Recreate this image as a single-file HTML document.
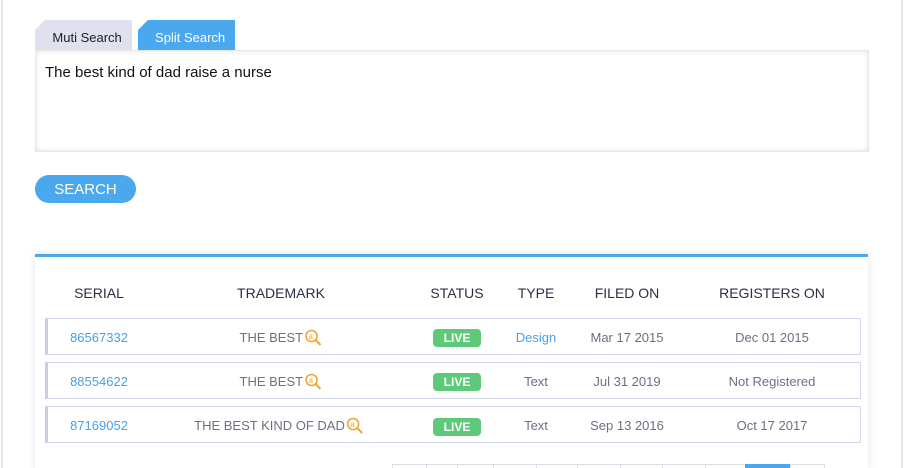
<!DOCTYPE html>
<html style="overflow:hidden;height:468px"><head><style>
body{margin:0;width:904px;height:468px;overflow:hidden;background:#fff;font-family:"Liberation Sans",sans-serif;position:relative}
.vl{position:absolute;top:0;bottom:0;width:2px;background:#e2e4f0}
.tab{position:absolute;top:20px;height:30px;width:97px;font-size:13px;line-height:36px;text-align:center;clip-path:polygon(10px 0,100% 0,100% 100%,0 100%,0 10px)}
.ta{position:absolute;left:35px;top:50px;width:832px;height:100px;border:1px solid #e8e8e8;box-shadow:inset 0 0 6px rgba(0,0,0,.12);font-size:15px;color:#111}
.btn{position:absolute;left:35px;top:175px;width:101px;height:28px;border-radius:14px;background:#4aa8ee;color:#fff;font-size:15px;line-height:29px;text-align:center}
.panel{position:absolute;left:35px;top:254px;width:833px;height:214px;border-top:3px solid #4aa8ee;box-shadow:0 0 8px rgba(0,0,0,.1);background:#fff}
.c{position:absolute;transform:translateX(-50%);white-space:nowrap}
.h{top:285px;font-size:14px;color:#2a2f45}
.row{position:absolute;left:45px;width:812px;height:35px;border:1px solid #d3d6ea;border-left:3px solid #c9cde6}
.t{font-size:13px;color:#6b7180}
.b{font-size:13px;color:#4aa0e8}
.live{background:#5ec97a;color:#fff;font-size:12px;font-weight:bold;width:48px;height:18px;line-height:19px;text-align:center;border-radius:4px}
.pg{position:absolute;top:464px;height:10px;border:1px solid #dcdfe6;border-right:none}
</style></head><body>
<div class="vl" style="left:1px"></div><div class="vl" style="left:901px"></div>
<div class="tab" style="left:35px;background:#dfe1ee;color:#222">&nbsp;&nbsp;Muti Search</div>
<div class="tab" style="left:138px;background:#4aa8ee;color:#fff">&nbsp;&nbsp;Split Search</div>
<div class="ta"><div style="position:absolute;left:9px;top:13px">The best kind of dad raise a nurse</div></div>
<div class="btn">SEARCH</div>
<div class="panel"></div>
<div class="c h" style="left:99px">SERIAL</div>
<div class="c h" style="left:281px">TRADEMARK</div>
<div class="c h" style="left:457px">STATUS</div>
<div class="c h" style="left:536px">TYPE</div>
<div class="c h" style="left:627px">FILED ON</div>
<div class="c h" style="left:772px">REGISTERS ON</div>

<div class="row" style="top:318px"></div>
<div class="row" style="top:362px"></div>
<div class="row" style="top:406px"></div>

<div class="c b" style="left:99px;top:330px">86567332</div>
<div class="c t" style="left:281px;top:329px">THE BEST <svg width="18" height="18" viewBox="0 0 18 18" style="vertical-align:-5px;margin-left:-2px"><circle cx="7" cy="7" r="5.5" fill="none" stroke="#f0a438" stroke-width="1.6"/><line x1="11" y1="11" x2="16" y2="16" stroke="#f0a438" stroke-width="2"/><text x="4" y="10" font-size="8" fill="#f0a438" font-family="Liberation Sans">a</text></svg></div>
<div class="c live" style="left:457px;top:329px">LIVE</div>
<div class="c b" style="left:536px;top:330px">Design</div>
<div class="c t" style="left:627px;top:330px">Mar 17 2015</div>
<div class="c t" style="left:772px;top:330px">Dec 01 2015</div>

<div class="c b" style="left:99px;top:374px">88554622</div>
<div class="c t" style="left:281px;top:373px">THE BEST <svg width="18" height="18" viewBox="0 0 18 18" style="vertical-align:-5px;margin-left:-2px"><circle cx="7" cy="7" r="5.5" fill="none" stroke="#f0a438" stroke-width="1.6"/><line x1="11" y1="11" x2="16" y2="16" stroke="#f0a438" stroke-width="2"/><text x="4" y="10" font-size="8" fill="#f0a438" font-family="Liberation Sans">a</text></svg></div>
<div class="c live" style="left:457px;top:373px">LIVE</div>
<div class="c t" style="left:536px;top:374px">Text</div>
<div class="c t" style="left:627px;top:374px">Jul 31 2019</div>
<div class="c t" style="left:772px;top:374px">Not Registered</div>

<div class="c b" style="left:99px;top:418px">87169052</div>
<div class="c t" style="left:279px;top:417px">THE BEST KIND OF DAD<svg width="18" height="18" viewBox="0 0 18 18" style="vertical-align:-5px;margin-left:1px"><circle cx="7" cy="7" r="5.5" fill="none" stroke="#f0a438" stroke-width="1.6"/><line x1="11" y1="11" x2="16" y2="16" stroke="#f0a438" stroke-width="2"/><text x="4" y="10" font-size="8" fill="#f0a438" font-family="Liberation Sans">a</text></svg></div>
<div class="c live" style="left:457px;top:418px">LIVE</div>
<div class="c t" style="left:536px;top:418px">Text</div>
<div class="c t" style="left:627px;top:418px">Sep 13 2016</div>
<div class="c t" style="left:772px;top:418px">Oct 17 2017</div>

<div class="pg" style="left:392px;width:34px"></div>
<div class="pg" style="left:426px;width:31px"></div>
<div class="pg" style="left:457px;width:36px"></div>
<div class="pg" style="left:493px;width:43px"></div>
<div class="pg" style="left:536px;width:41px"></div>
<div class="pg" style="left:577px;width:43px"></div>
<div class="pg" style="left:620px;width:42px"></div>
<div class="pg" style="left:662px;width:43px"></div>
<div class="pg" style="left:705px;width:40px"></div>
<div class="pg" style="left:745px;width:45px;background:#4aa8ee;border-color:#4aa8ee"></div>
<div class="pg" style="left:790px;width:33px;border-right:1px solid #dcdfe6"></div>
</body></html>
